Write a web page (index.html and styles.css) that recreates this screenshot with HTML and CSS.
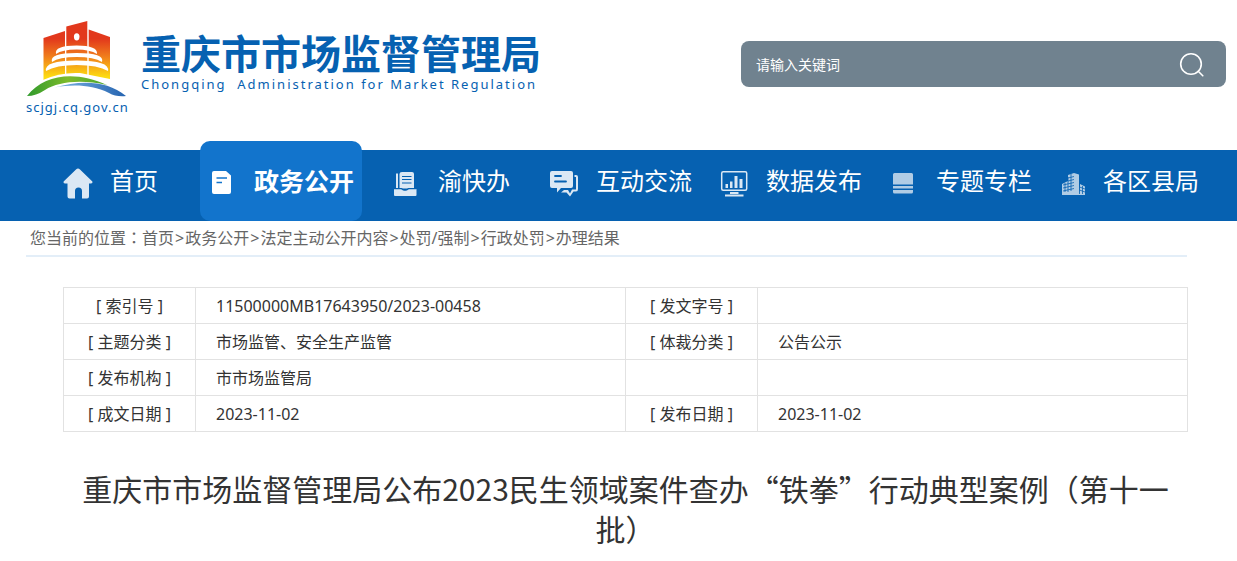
FILE: index.html
```html
<!DOCTYPE html>
<html lang="zh-CN">
<head>
<meta charset="utf-8">
<title>重庆市市场监督管理局</title>
<link rel="stylesheet" href="styles.css">
</head>
<body>
<header class="header">
  <a class="brand" href="#">
    <span class="emblem">
      <svg class="emblem-art" viewBox="26 20 102 78" width="102" height="78" aria-hidden="true">
        <defs>
          <linearGradient id="tower" x1="0" y1="21" x2="0" y2="80" gradientUnits="userSpaceOnUse">
            <stop offset="0.3" stop-color="#e2381c"/><stop offset="0.6" stop-color="#f07d1c"/><stop offset="0.95" stop-color="#fddc10"/>
          </linearGradient>
          <linearGradient id="green" x1="27" y1="0" x2="108" y2="0" gradientUnits="userSpaceOnUse">
            <stop offset="0" stop-color="#2f9a2c"/><stop offset="0.5" stop-color="#7dbb2b"/><stop offset="1" stop-color="#4aa52e"/>
          </linearGradient>
          <linearGradient id="blue" x1="55" y1="0" x2="126" y2="0" gradientUnits="userSpaceOnUse">
            <stop offset="0" stop-color="#7db4e2"/><stop offset="1" stop-color="#2463b0"/>
          </linearGradient>
        </defs>
        <g fill="url(#tower)">
          <path d="M43.500 38L65 31V78L43.500 80Z"/>
          <path d="M66.300 26.500L87.300 21V78H66.300Z"/>
          <path d="M88.700 29.500L110 37V80L88.700 77Z"/>
        </g>
        <ellipse cx="76.700" cy="36.800" rx="2.800" ry="3.600" fill="#fff"/>
        <g fill="#fff">
          <path d="M56 54Q54 45.500 76.700 45.500Q98 45.500 97 54Q90 49.500 76.700 49.500Q62 49.500 56 54Z"/>
          <path d="M52 62Q49 53 76.700 53Q105 53 102 62Q94 57 76.700 57Q59 57 52 62Z"/>
          <path d="M46 71Q44 60.500 76.700 60.500Q110 60.500 108 71Q98 65 76.700 65Q56 65 46 71Z"/>
          <path d="M43 80Q60 72 80 73L110 79V82H43Z"/>
        </g>
        <path d="M27 96C45 73 77 71 107 85C80 79 58 82 45 90Q36 96 27 96Z" fill="url(#green)"/>
        <path d="M55 87.500C80 80 107 80 126 96Q116 97 109 93C92 85 74 84 55 87.500Z" fill="url(#blue)"/>
      </svg>
      <span class="emblem-url">scjgj.cq.gov.cn</span>
    </span>
    <span class="brand-text">
      <span class="brand-name">重庆市市场监督管理局</span>
      <span class="brand-en">Chongqing&nbsp; Administration for Market Regulation</span>
    </span>
  </a>
  <form class="search">
    <input class="search-input" type="text" placeholder="请输入关键词" aria-label="请输入关键词">
    <button class="search-button" type="button" aria-label="搜索">
      <svg viewBox="0 0 26 26" width="26" height="26" fill="none" stroke="#fff" stroke-width="1.600" stroke-linecap="round"><circle cx="12" cy="12" r="10.300"/><path d="M19.200 19.200L23.800 23.800"/></svg>
    </button>
  </form>
</header>

<nav class="nav">
  <a class="nav-item nav-home" href="#">
    <svg class="nav-icon" viewBox="0 0 30 32"><path fill="#dbe8f4" d="M15 1.500Q16 1.500 17 2.500L29.400 14.500Q30 16.500 28 16.500H26V29.500Q26 31.500 24 31.500H19V24Q19 20.500 15.500 20.500T12 24V31.500H6.500Q4.500 31.500 4.500 29.500V16.500H2Q0 16.500 .6 14.500L13 2.500Q14 1.500 15 1.500Z"/></svg>
    <span>首页</span>
  </a>
  <a class="nav-item nav-active" href="#">
    <svg class="nav-icon" viewBox="0 0 30 32"><path fill="#fff" d="M7 4H19L24 8.500V25Q24 27 22 27H7Q5 27 5 25V6Q5 4 7 4Z"/><path stroke="#1274cc" stroke-width="1.500" d="M9.500 11H20M9.500 15.500H15"/></svg>
    <span>政务公开</span>
  </a>
  <a class="nav-item nav-service" href="#">
    <svg class="nav-icon" viewBox="0 0 30 32"><path fill="#dbe8f4" d="M5 6.500H7V21H5ZM11 5H21Q23 5 23 7V21.500H8.500V7Q8.500 5 11 5ZM3 22H11Q14 24.500 17 22H25.500V28Q25.500 29 24.500 29H4Q3 29 3 28Z"/><path stroke="#0661b1" stroke-width="1.200" d="M11 9.500H20.500M11 12.500H20.500M11 16H20.500M3 21.700H10.500Q14 24.500 17.500 21.700H25.500" fill="none"/></svg>
    <span>渝快办</span>
  </a>
  <a class="nav-item" href="#">
    <svg class="nav-icon" viewBox="0 0 30 32"><path fill="#dbe8f4" d="M3 4H22Q24 4 24 6V19Q24 21 22 21H12L8 25.500V21H3Q1 21 1 19V6Q1 4 3 4Z"/><path fill="#dbe8f4" d="M25.500 8H27Q29 8 29 10V22Q29 24.500 27 24.500H24.500L21 29.500L17.500 25.500H12L15 23H19L21 26.500L23 22.500H27V10H25.500Z"/><path stroke="#0661b1" stroke-width="1.800" stroke-linecap="round" d="M6 9H12M6 14.500H17"/></svg>
    <span>互动交流</span>
  </a>
  <a class="nav-item" href="#">
    <svg class="nav-icon" viewBox="0 0 30 32"><rect x="2.700" y="4.700" width="25" height="18.600" rx="1.500" fill="none" stroke="#dbe8f4" stroke-width="1.500"/><path fill="#dbe8f4" d="M6.500 17H9V21H6.500ZM11 14.500H13.500V21H11ZM15.500 9H18.500V21H15.500ZM20.500 12H23.500V21H20.500ZM11 25H19.500V27H11ZM6 27.500H24.500V29.500H6Z"/></svg>
    <span>数据发布</span>
  </a>
  <a class="nav-item" href="#">
    <svg class="nav-icon" viewBox="0 0 30 32"><path fill="#b0cce5" d="M4 17.500V7.500Q4 6 5.500 6H22.500Q24 6 24 7.500V17.500ZM4 19H24V21.500H4ZM4 23H24V25Q24 26.500 22.500 26.500H5.500Q4 26.500 4 25Z"/></svg>
    <span>专题专栏</span>
  </a>
  <a class="nav-item nav-last" href="#">
    <svg class="nav-icon" viewBox="0 0 30 32"><path fill="#b0cce5" d="M9 8L15 6V27H3V17L9 14ZM15 6L20 7.500V27H15ZM21 17L26 19.500V28H20ZM3 26H26V28H3Z"/><path fill="none" stroke="#0661b1" stroke-width=".8" d="M9 11L15 9.500M9 14L15 12.500M4 18L15 15.500M4 21L15 18.500M4 24L15 21.500M12 7V24M9 10V25M6 16V25M20.500 20L26 22M20.500 23L26 25M23.500 19V27M20.500 10V27"/></svg>
    <span>各区县局</span>
  </a>
</nav>

<div class="crumbs">您当前的位置<span class="wide" lang="zh-TW">：</span><a href="#">首页</a><span class="sep">&gt;</span><a href="#">政务公开</a><span class="sep">&gt;</span><a href="#">法定主动公开内容</a><span class="sep">&gt;</span><a href="#">处罚/强制</a><span class="sep">&gt;</span><a href="#">行政处罚</a><span class="sep">&gt;</span><a href="#">办理结果</a></div>

<main class="article">
  <table class="meta">
    <tr><th scope="row">[ 索引号 ]</th><td>11500000MB17643950/2023-00458</td><th scope="row">[ 发文字号 ]</th><td></td></tr>
    <tr><th scope="row">[ 主题分类 ]</th><td>市场监管、安全生产监管</td><th scope="row">[ 体裁分类 ]</th><td>公告公示</td></tr>
    <tr><th scope="row">[ 发布机构 ]</th><td>市市场监管局</td><th></th><td></td></tr>
    <tr><th scope="row">[ 成文日期 ]</th><td>2023-11-02</td><th scope="row">[ 发布日期 ]</th><td>2023-11-02</td></tr>
  </table>
  <h1 class="title" lang="zh-CN">重庆市市场监督管理局公布2023民生领域案件查办“铁拳”行动典型案例（第十一批）</h1>
</main>
</body>
</html>
```
FILE: styles.css
```css
* { box-sizing: border-box; }

body {
  margin: 0;
  background: #fff;
  color: #333;
  font: 16px/24px "Noto Sans", "Noto Sans CJK SC", sans-serif;
}

a { color: inherit; text-decoration: none; }

.wide { font-family: "Noto Sans CJK TC", sans-serif; line-height: 1; }

.header {
  display: flex;
  justify-content: space-between;
  align-items: flex-start;
  height: 150px;
  padding: 20px 11px 0 26px;
}

.brand { display: flex; gap: 13px; color: #0661b1; }

.emblem { display: flex; flex-direction: column; width: 102px; }

.emblem-art { display: block; }

.emblem-url {
  font-size: 13px;
  line-height: 18px;
  letter-spacing: 1px;
  white-space: nowrap;
}

.brand-text { display: flex; flex-direction: column; padding-top: 14px; }

.brand-name { font-size: 40px; font-weight: 700; line-height: 40px; white-space: nowrap; }

.brand-en { font-size: 13px; line-height: 20px; letter-spacing: 2px; white-space: nowrap; }

.search {
  display: flex;
  align-items: center;
  width: 485px;
  height: 46px;
  margin-top: 21px;
  padding: 2px 21px 0 15px;
  border-radius: 8px;
  background: #70828f;
}

.search-input {
  flex: 1;
  min-width: 0;
  padding: 0;
  border: 0;
  outline: 0;
  background: transparent;
  color: #fff;
  font: inherit;
  font-size: 14px;
}

.search-input::placeholder { color: #fff; opacity: 1; }

.search-button { display: flex; padding: 0; border: 0; background: transparent; cursor: pointer; }

.nav {
  display: flex;
  align-items: flex-end;
  gap: 27px;
  height: 71px;
  padding-left: 63px;
  background: #0661b1;
  color: #fff;
  font-size: 24px;
  line-height: 32px;
  white-space: nowrap;
}

.nav-item {
  display: flex;
  align-items: center;
  gap: 17px;
  height: 80px;
}

.nav-home { margin-right: 15px; }

.nav-service { margin-right: 12px; margin-left: 2px; }

.nav-last { gap: 14px; }

.nav-active {
  padding-right: 8px;
  padding-left: 7px;
  border-radius: 10px;
  background: #1274cc;
  font-size: 25px;
  font-weight: 700;
}

.nav-icon { display: block; width: 30px; height: 32px; margin-top: 4px; }

.crumbs {
  margin: 0 50px 0 26px;
  padding: 5px 4px;
  border-bottom: 2px solid #e3eef8;
  color: #666;
}

.sep { padding: 0 1px; }

.article { margin: 30px 49px 0 63px; }

.meta { width: 100%; border-collapse: collapse; table-layout: fixed; }

.meta th, .meta td {
  height: 36px;
  padding: 0 20px;
  border: 1px solid #e2e2e2;
  font-weight: 400;
  text-align: left;
}

.meta th { width: 132px; padding: 0; text-align: center; }

.title {
  margin: 36px 0 0;
  padding: 0 15px;
  font-family: "Noto Sans CJK SC", sans-serif;
  font-size: 30px;
  font-weight: 400;
  line-height: 40px;
  text-align: center;
}
```
